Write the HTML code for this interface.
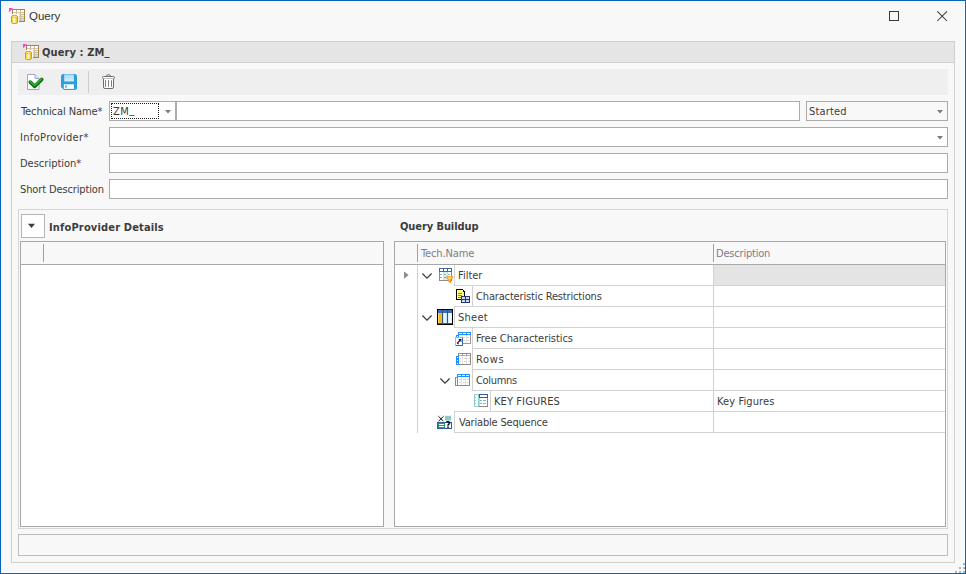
<!DOCTYPE html>
<html>
<head>
<meta charset="utf-8">
<title>Query</title>
<style>
html,body{margin:0;padding:0;}
body{width:966px;height:574px;overflow:hidden;background:#f8f8f8;position:relative;
  font-family:"DejaVu Sans Condensed","Liberation Sans",sans-serif;font-size:11px;color:#3c3c3c;}
*{box-sizing:border-box;}
.abs{position:absolute;}
#win{position:absolute;left:0;top:0;width:966px;height:574px;border:1px solid #0566b8;background:#f8f8f8;box-shadow:inset 0 0 0 1px #ffffff;}
.t{position:absolute;white-space:nowrap;line-height:14px;height:14px;}
.b{font-weight:bold;}
.inp{position:absolute;height:20px;border:1px solid #ababab;background:#fff;}
.hl{position:absolute;height:1px;background:#d4d4d4;}
.vl{position:absolute;width:1px;background:#d4d4d4;}
svg{position:absolute;overflow:visible;}
</style>
</head>
<body>
<div id="win"></div>

<!-- title bar -->
<svg style="left:9px;top:8px" width="16" height="16" viewBox="0 0 16 16" shape-rendering="crispEdges"><rect x="3" y="1" width="13" height="13" fill="#a98450" /><rect x="4" y="2" width="11" height="11" fill="#ffffff" /><rect x="4" y="2" width="11" height="1" fill="#ffffff" /><rect x="4" y="3" width="11" height="1" fill="#fbfdff" /><rect x="4" y="5" width="11" height="1" fill="#ecf5ff" /><rect x="4" y="7" width="11" height="1" fill="#dcedff" /><rect x="4" y="9" width="11" height="1" fill="#cce4ff" /><rect x="4" y="11" width="11" height="1" fill="#c0deff" /><rect x="4" y="12" width="11" height="1" fill="#b8daff" /><rect x="7" y="2" width="1" height="11" fill="#c9b48c" /><rect x="11" y="2" width="1" height="11" fill="#c9b48c" /><rect x="4" y="4" width="11" height="1" fill="#d6c6a4" /><rect x="4" y="6" width="11" height="1" fill="#d6c6a4" /><rect x="4" y="8" width="11" height="1" fill="#d6c6a4" /><rect x="4" y="10" width="11" height="1" fill="#d6c6a4" /><rect x="3" y="6" width="7" height="8" fill="#ffffff" opacity="0.9"/><polygon points="0,0 4.2,0 0,4.2" fill="#ff3fd0" shape-rendering="geometricPrecision"/><g shape-rendering="geometricPrecision"><defs><linearGradient id="cy" x1="0" x2="1" y1="0" y2="0"><stop offset="0" stop-color="#efbc1c"/><stop offset="0.2" stop-color="#fbe050"/><stop offset="0.45" stop-color="#fffcd4"/><stop offset="0.75" stop-color="#fbdc44"/><stop offset="1" stop-color="#e2a814"/></linearGradient></defs><path d="M2.5 8.4 Q2.5 7.4 5.5 7.4 Q8.5 7.4 8.5 8.4 V14.6 Q8.5 15.6 5.5 15.6 Q2.5 15.6 2.5 14.6 Z" fill="url(#cy)" stroke="#cc9a24" stroke-width="1"/><ellipse cx="5.5" cy="8.7" rx="2.6" ry="0.9" fill="#fdeea0" stroke="#d8a420" stroke-width="0.5"/></g></svg>
<div class="t" style="left:29px;top:9px;letter-spacing:0.0px;font-size:11.5px;font-family:'Liberation Sans',sans-serif;color:#333;">Query</div>
<svg style="left:889px;top:11px" width="12" height="12" viewBox="0 0 12 12" shape-rendering="crispEdges"><rect x="0.5" y="0.5" width="9" height="9" fill="none" stroke="#3a3a3a" stroke-width="1"/></svg>
<svg style="left:937px;top:11px" width="12" height="12" viewBox="0 0 12 12"><path d="M0.3 0.3 L10 10 M10 0.3 L0.3 10" fill="none" stroke="#3a3a3a" stroke-width="1.05"/></svg>

<!-- group panel -->
<div class="abs" style="left:11px;top:41px;width:944px;height:522px;border:1px solid #cfcfcf;background:#f8f8f8;"></div>
<div class="abs" style="left:12px;top:42px;width:942px;height:20px;background:#e5e5e5;"></div>
<div class="hl" style="left:12px;top:62px;width:942px;background:#d0d0d0;"></div>
<svg style="left:23px;top:44px" width="16" height="16" viewBox="0 0 16 16" shape-rendering="crispEdges"><rect x="3" y="1" width="13" height="13" fill="#a98450" /><rect x="4" y="2" width="11" height="11" fill="#ffffff" /><rect x="4" y="2" width="11" height="1" fill="#ffffff" /><rect x="4" y="3" width="11" height="1" fill="#fbfdff" /><rect x="4" y="5" width="11" height="1" fill="#ecf5ff" /><rect x="4" y="7" width="11" height="1" fill="#dcedff" /><rect x="4" y="9" width="11" height="1" fill="#cce4ff" /><rect x="4" y="11" width="11" height="1" fill="#c0deff" /><rect x="4" y="12" width="11" height="1" fill="#b8daff" /><rect x="7" y="2" width="1" height="11" fill="#c9b48c" /><rect x="11" y="2" width="1" height="11" fill="#c9b48c" /><rect x="4" y="4" width="11" height="1" fill="#d6c6a4" /><rect x="4" y="6" width="11" height="1" fill="#d6c6a4" /><rect x="4" y="8" width="11" height="1" fill="#d6c6a4" /><rect x="4" y="10" width="11" height="1" fill="#d6c6a4" /><rect x="3" y="6" width="7" height="8" fill="#ffffff" opacity="0.9"/><polygon points="0,0 4.2,0 0,4.2" fill="#ff3fd0" shape-rendering="geometricPrecision"/><g shape-rendering="geometricPrecision"><defs><linearGradient id="cy" x1="0" x2="1" y1="0" y2="0"><stop offset="0" stop-color="#efbc1c"/><stop offset="0.2" stop-color="#fbe050"/><stop offset="0.45" stop-color="#fffcd4"/><stop offset="0.75" stop-color="#fbdc44"/><stop offset="1" stop-color="#e2a814"/></linearGradient></defs><path d="M2.5 8.4 Q2.5 7.4 5.5 7.4 Q8.5 7.4 8.5 8.4 V14.6 Q8.5 15.6 5.5 15.6 Q2.5 15.6 2.5 14.6 Z" fill="url(#cy)" stroke="#cc9a24" stroke-width="1"/><ellipse cx="5.5" cy="8.7" rx="2.6" ry="0.9" fill="#fdeea0" stroke="#d8a420" stroke-width="0.5"/></g></svg>
<div class="t b" style="left:42px;top:46px;letter-spacing:0.1px;">Query : ZM<span style="position:relative;top:-1px">_</span></div>

<!-- toolbar -->
<div class="abs" style="left:18px;top:69px;width:930px;height:26px;background:#efefef;"></div>
<div class="vl" style="left:88px;top:71px;height:22px;background:#cdcdcd;"></div>
<svg style="left:27px;top:74px" width="16" height="16" viewBox="0 0 16 16"><g shape-rendering="geometricPrecision"><path d="M0.5 0.5 H8 L12 4.5 V15.5 H0.5 Z" fill="#ffffff" stroke="#a2a2ca" stroke-width="1"/><path d="M8 0.5 V4.5 H12" fill="#e8e8f4" stroke="#a2a2ca" stroke-width="1"/><path d="M3.3 8.1 L7.7 12.3 L14.7 5.5" fill="none" stroke="#107410" stroke-width="3.7" stroke-linecap="round" stroke-linejoin="round"/><path d="M3.5 7.7 L7.7 11.5 L14.5 5.1" fill="none" stroke="#3cb43c" stroke-width="1.3" stroke-linecap="round" stroke-linejoin="round"/></g></svg>
<svg style="left:61px;top:74px" width="16" height="16" viewBox="0 0 16 16"><g shape-rendering="geometricPrecision"><defs><linearGradient id="sv" x1="0" x2="0" y1="0" y2="1"><stop offset="0" stop-color="#a8d8f0"/><stop offset="1" stop-color="#d6eefa"/></linearGradient></defs><path d="M2.5 0 H13.5 Q16 0 16 2.5 V13.5 Q16 16 13.5 16 H3 L0 13 V2.5 Q0 0 2.5 0 Z" fill="#2a9fd8"/><rect x="3.2" y="0.4" width="9.8" height="7" fill="url(#sv)"/><rect x="2.8" y="10.3" width="10.2" height="4.6" fill="#ffffff"/><rect x="4.2" y="11.5" width="1.5" height="2.2" fill="#2a9fd8"/></g></svg>
<svg style="left:102px;top:74px" width="14" height="16" viewBox="0 0 14 16"><g shape-rendering="geometricPrecision" fill="none" stroke="#6e6e6e" stroke-width="1"><path d="M4.5 2.5 Q4.5 0.6 6.5 0.6 Q8.5 0.6 8.5 2.5" /><rect x="0.5" y="2.5" width="12" height="2.1" rx="1" fill="#ffffff"/><path d="M1.5 4.6 V13 Q1.5 14.5 3 14.5 H10 Q11.5 14.5 11.5 13 V4.6" fill="#ffffff"/><path d="M3.5 6.2 V12.8 M6.5 6.2 V12.8 M9.5 6.2 V12.8" stroke-width="0.9"/></g></svg>

<!-- form -->
<div class="t" style="left:21px;top:105px;letter-spacing:-0.071px;">Technical Name*</div>
<div class="t" style="left:20px;top:131px;letter-spacing:0.333px;">InfoProvider*</div>
<div class="t" style="left:20px;top:157px;letter-spacing:0.0px;">Description*</div>
<div class="t" style="left:20px;top:183px;letter-spacing:-0.125px;">Short Description</div>

<div class="inp" style="left:109px;top:101px;width:67px;"></div>
<div class="abs" style="left:111px;top:103px;width:48px;height:16px;border:1px dotted #222;"></div>
<div class="t" style="left:113px;top:105px;letter-spacing:0.5px;">ZM<span style="position:relative;top:-2px">_</span></div>
<svg style="left:165px;top:110px" width="7" height="4" viewBox="0 0 7 4"><polygon points="0,0 6,0 3,3.4" fill="#7c7c7c" shape-rendering="geometricPrecision"/></svg>
<div class="inp" style="left:176px;top:101px;width:624px;"></div>
<div class="inp" style="left:806px;top:101px;width:142px;background:#f8f8f8;"></div>
<div class="t" style="left:809px;top:105px;letter-spacing:0.167px;">Started</div>
<svg style="left:937px;top:110px" width="7" height="4" viewBox="0 0 7 4"><polygon points="0,0 6,0 3,3.4" fill="#7c7c7c" shape-rendering="geometricPrecision"/></svg>
<div class="inp" style="left:109px;top:127px;width:839px;"></div>
<svg style="left:937px;top:136px" width="7" height="4" viewBox="0 0 7 4"><polygon points="0,0 6,0 3,3.4" fill="#7c7c7c" shape-rendering="geometricPrecision"/></svg>
<div class="inp" style="left:109px;top:153px;width:839px;"></div>
<div class="inp" style="left:109px;top:179px;width:839px;"></div>

<!-- inner panel -->
<div class="abs" style="left:18px;top:209px;width:930px;height:320px;border:1px solid #d6d6d6;"></div>
<div class="abs" style="left:21px;top:214px;width:24px;height:24px;border:1px solid #b4b4b4;background:#fff;"></div>
<svg style="left:28px;top:223px" width="8" height="6" viewBox="0 0 8 6"><polygon points="0,0.7 7,0.7 3.5,4.9" fill="#3c3c3c"/></svg>
<div class="t b" style="left:49px;top:221px;letter-spacing:0.158px;">InfoProvider Details</div>
<div class="t b" style="left:400px;top:220px;letter-spacing:-0.083px;">Query Buildup</div>

<!-- left grid -->
<div class="abs" style="left:20px;top:241px;width:364px;height:286px;border:1px solid #a8a8a8;background:#fff;"></div>
<div class="abs" style="left:21px;top:242px;width:362px;height:22px;background:#f8f8f8;"></div>
<div class="hl" style="left:21px;top:264px;width:362px;background:#a8a8a8;"></div>
<div class="vl" style="left:43px;top:244px;height:18px;background:#a0a0a0;"></div>

<!-- right grid -->
<div class="abs" style="left:394px;top:241px;width:552px;height:286px;border:1px solid #a8a8a8;background:#fff;"></div>
<div class="abs" style="left:395px;top:242px;width:550px;height:22px;background:#f8f8f8;"></div>
<div class="hl" style="left:395px;top:264px;width:550px;background:#a8a8a8;"></div>
<div class="vl" style="left:417px;top:244px;height:18px;background:#a0a0a0;"></div>
<div class="vl" style="left:713px;top:244px;height:18px;background:#a0a0a0;"></div>
<div class="t" style="left:421px;top:247px;letter-spacing:-0.125px;color:#7d7d84;">Tech.Name</div>
<div class="t" style="left:716px;top:247px;letter-spacing:-0.2px;color:#7d7d84;">Description</div>
<div class="vl" style="left:417px;top:265px;height:168px;background:#d2d2d2;"></div><div class="abs" style="left:714px;top:265px;width:231px;height:20px;background:#e4e4e4;"></div><div class="vl" style="left:713px;top:265px;height:168px;background:#d2d2d2;"></div><div class="vl" style="left:454px;top:265px;height:21px;background:#d2d2d2;"></div><div class="hl" style="left:454px;top:285px;width:491px;background:#d2d2d2;"></div><div class="t" style="left:458px;top:269px;letter-spacing:0.0px;">Filter</div><svg style="left:422px;top:273px" width="10" height="6" viewBox="0 0 10 6"><path d="M0.4 0.5 L5 5.1 L9.6 0.5" fill="none" stroke="#3c3c3c" stroke-width="1.25" shape-rendering="geometricPrecision"/></svg><svg style="left:439px;top:268px" width="14" height="15" viewBox="0 0 14 15" shape-rendering="crispEdges"><rect x="0" y="0" width="13" height="4" fill="#3a6aa8" /><rect x="1" y="1" width="3" height="2" fill="#ffffff" /><rect x="5" y="1" width="3" height="2" fill="#ffffff" /><rect x="9" y="1" width="3" height="2" fill="#ffffff" /><rect x="0" y="4" width="13" height="9" fill="#8c8c8c" /><rect x="1" y="4" width="11" height="8" fill="#ffffff" /><rect x="5" y="4" width="3" height="8" fill="#d6f0f6" /><rect x="4" y="4" width="1" height="8" fill="#c8dfe4" /><rect x="8" y="4" width="1" height="8" fill="#c8dfe4" /><rect x="1" y="6" width="2" height="1" fill="#6cbcbc" /><rect x="5" y="6" width="2" height="1" fill="#6cbcbc" /><rect x="9" y="6" width="2" height="1" fill="#6cbcbc" /><rect x="1" y="9" width="2" height="1" fill="#6cbcbc" /><rect x="5" y="9" width="2" height="1" fill="#6cbcbc" /><rect x="9" y="9" width="2" height="1" fill="#6cbcbc" /><g shape-rendering="geometricPrecision"><path d="M7.6 8.8 H13.6 V9.6 L11.5 11.6 V14.3 L9.9 13.5 V11.6 L7.6 9.6 Z" fill="#ffe9a0" stroke="#ff9000" stroke-width="1.1" stroke-linejoin="round"/></g></svg>
<div class="vl" style="left:472px;top:286px;height:21px;background:#d2d2d2;"></div><div class="hl" style="left:454px;top:306px;width:491px;background:#d2d2d2;"></div><div class="t" style="left:476px;top:290px;letter-spacing:-0.154px;">Characteristic Restrictions</div><svg style="left:456px;top:289px" width="14" height="14" viewBox="0 0 14 14" shape-rendering="crispEdges"><rect x="0" y="0" width="7" height="11" fill="#000000" /><rect x="1" y="1" width="5" height="9" fill="#ffff80" /><rect x="7" y="1" width="1" height="1" fill="#000" /><rect x="7" y="2" width="2" height="9" fill="#000" /><rect x="6" y="1" width="1" height="2" fill="#ffff80" /><rect x="6" y="3" width="2" height="7" fill="#ffff80" /><rect x="6" y="0" width="1" height="1" fill="#000" /><rect x="6" y="1" width="1" height="1" fill="#ffffc8" /><rect x="2" y="4" width="4" height="1" fill="#8c8c50" /><rect x="2" y="6" width="4" height="1" fill="#8c8c50" /><rect x="2" y="8" width="4" height="1" fill="#8c8c50" /><rect x="5" y="7" width="9" height="7" fill="#1c3c7c" /><rect x="6" y="8" width="3" height="2" fill="#d8d4f8" /><rect x="10" y="8" width="3" height="2" fill="#d8d4f8" /><rect x="6" y="11" width="3" height="2" fill="#d8d4f8" /><rect x="10" y="11" width="3" height="2" fill="#d8d4f8" /></svg>
<div class="vl" style="left:454px;top:307px;height:21px;background:#d2d2d2;"></div><div class="hl" style="left:454px;top:327px;width:491px;background:#d2d2d2;"></div><div class="t" style="left:458px;top:311px;letter-spacing:0.25px;">Sheet</div><svg style="left:422px;top:315px" width="10" height="6" viewBox="0 0 10 6"><path d="M0.4 0.5 L5 5.1 L9.6 0.5" fill="none" stroke="#3c3c3c" stroke-width="1.25" shape-rendering="geometricPrecision"/></svg><svg style="left:437px;top:309px" width="16" height="16" viewBox="0 0 16 16" shape-rendering="crispEdges"><rect x="0" y="0" width="16" height="16" fill="#000000" /><rect x="1" y="1" width="14" height="14" fill="#e4f4ff" /><rect x="1" y="1" width="14" height="3" fill="#3a6cc0" /><rect x="1" y="4" width="4" height="11" fill="#f8b820" /><rect x="1" y="4" width="1" height="11" fill="#ffd870" /><rect x="5" y="1" width="1" height="14" fill="#2c5a70" /><rect x="10" y="1" width="1" height="14" fill="#2c5a70" /><rect x="6" y="4" width="4" height="11" fill="#c8e8fc" /><rect x="11" y="4" width="4" height="11" fill="#d8f0ff" /><rect x="7" y="4" width="2" height="11" fill="#e8f6ff" /><rect x="12" y="4" width="2" height="11" fill="#f4fbff" /><rect x="1" y="14" width="14" height="1" fill="#585070" /></svg>
<div class="vl" style="left:472px;top:328px;height:21px;background:#d2d2d2;"></div><div class="hl" style="left:472px;top:348px;width:473px;background:#d2d2d2;"></div><div class="t" style="left:476px;top:332px;letter-spacing:-0.053px;">Free Characteristics</div><svg style="left:455px;top:332px" width="16" height="14" viewBox="0 0 16 14" shape-rendering="crispEdges"><rect x="3" y="0" width="13" height="3" fill="#1e90ff" /><rect x="4" y="1" width="3" height="1" fill="#ffffff" /><rect x="8" y="1" width="3" height="1" fill="#ffffff" /><rect x="12" y="1" width="3" height="1" fill="#ffffff" /><rect x="3" y="3" width="13" height="9" fill="#9a9a9a" /><rect x="3" y="3" width="12" height="8" fill="#ffffff" /><rect x="7" y="3" width="1" height="8" fill="#e2e2e2" /><rect x="11" y="3" width="1" height="8" fill="#e2e2e2" /><rect x="8" y="5" width="2" height="1" fill="#d4d4d4" /><rect x="12" y="5" width="2" height="1" fill="#d4d4d4" /><rect x="8" y="8" width="2" height="1" fill="#d4d4d4" /><rect x="12" y="8" width="2" height="1" fill="#d4d4d4" /><rect x="1" y="3" width="3" height="2" fill="#1e90ff" /><rect x="2" y="4" width="1" height="1" fill="#d8ecff" /><rect x="0" y="5" width="8" height="9" fill="#8cc6ca" /><rect x="7" y="6" width="1" height="8" fill="#3c6c9c" /><rect x="1" y="13" width="7" height="1" fill="#3c6c9c" /><rect x="1" y="6" width="6" height="7" fill="#ffffff" /><g shape-rendering="geometricPrecision"><polygon points="3.2,7 6.4,7 6.4,10.2" fill="#1a1a5c"/><path d="M5.4 8 L2.4 11 L3.6 12.2" fill="none" stroke="#1a1a5c" stroke-width="1.2"/></g></svg>
<div class="vl" style="left:472px;top:349px;height:21px;background:#d2d2d2;"></div><div class="hl" style="left:472px;top:369px;width:473px;background:#d2d2d2;"></div><div class="t" style="left:476px;top:353px;letter-spacing:0.667px;">Rows</div><svg style="left:456px;top:353px" width="15" height="12" viewBox="0 0 15 12" shape-rendering="crispEdges"><rect x="2" y="0" width="13" height="12" fill="#8c8c8c" /><rect x="3" y="1" width="11" height="10" fill="#ffffff" /><rect x="3" y="2" width="11" height="1" fill="#b4b4b4" /><rect x="6" y="1" width="1" height="2" fill="#a0a0a0" /><rect x="10" y="1" width="1" height="2" fill="#a0a0a0" /><rect x="6" y="3" width="1" height="8" fill="#e2e2e2" /><rect x="10" y="3" width="1" height="8" fill="#e2e2e2" /><rect x="4" y="5" width="1" height="1" fill="#d6c8c0" /><rect x="8" y="5" width="2" height="1" fill="#d2d2d2" /><rect x="12" y="5" width="2" height="1" fill="#d2d2d2" /><rect x="4" y="8" width="1" height="1" fill="#d6c8c0" /><rect x="8" y="8" width="2" height="1" fill="#d2d2d2" /><rect x="12" y="8" width="2" height="1" fill="#d2d2d2" /><rect x="0" y="3" width="3" height="9" fill="#1e90ff" /><rect x="1" y="4" width="1" height="1" fill="#ffffff" /><rect x="1" y="7" width="1" height="1" fill="#ffffff" /><rect x="1" y="10" width="1" height="1" fill="#ffffff" /></svg>
<div class="vl" style="left:472px;top:370px;height:21px;background:#d2d2d2;"></div><div class="hl" style="left:472px;top:390px;width:473px;background:#d2d2d2;"></div><div class="t" style="left:476px;top:374px;letter-spacing:-0.333px;">Columns</div><svg style="left:440px;top:378px" width="10" height="6" viewBox="0 0 10 6"><path d="M0.4 0.5 L5 5.1 L9.6 0.5" fill="none" stroke="#3c3c3c" stroke-width="1.25" shape-rendering="geometricPrecision"/></svg><svg style="left:455px;top:374px" width="15" height="12" viewBox="0 0 15 12" shape-rendering="crispEdges"><rect x="0" y="3" width="15" height="9" fill="#8c8c8c" /><rect x="1" y="3" width="13" height="8" fill="#ffffff" /><rect x="2" y="3" width="1" height="8" fill="#909090" /><rect x="0" y="3" width="3" height="1" fill="#8c8c8c" /><rect x="6" y="3" width="1" height="8" fill="#e2e2e2" /><rect x="10" y="3" width="1" height="8" fill="#e2e2e2" /><rect x="4" y="5" width="2" height="1" fill="#d2d2d2" /><rect x="8" y="5" width="2" height="1" fill="#d2d2d2" /><rect x="12" y="5" width="2" height="1" fill="#d2d2d2" /><rect x="4" y="8" width="2" height="1" fill="#d2d2d2" /><rect x="8" y="8" width="2" height="1" fill="#d2d2d2" /><rect x="12" y="8" width="2" height="1" fill="#d2d2d2" /><rect x="2" y="0" width="13" height="3" fill="#1e90ff" /><rect x="3" y="1" width="3" height="1" fill="#ffffff" /><rect x="7" y="1" width="3" height="1" fill="#ffffff" /><rect x="11" y="1" width="3" height="1" fill="#ffffff" /></svg>
<div class="vl" style="left:490px;top:391px;height:21px;background:#d2d2d2;"></div><div class="hl" style="left:454px;top:411px;width:491px;background:#d2d2d2;"></div><div class="t" style="left:494px;top:395px;letter-spacing:0.1px;">KEY FIGURES</div><div class="t" style="left:717px;top:395px;letter-spacing:0.1px;">Key Figures</div><svg style="left:474px;top:394px" width="14" height="13" viewBox="0 0 14 13" shape-rendering="crispEdges"><rect x="0" y="0" width="5" height="13" fill="#90cccc" /><rect x="1" y="1" width="3" height="11" fill="#ffffff" /><rect x="0" y="3" width="2" height="1" fill="#90cccc" /><rect x="0" y="6" width="2" height="1" fill="#90cccc" /><rect x="0" y="9" width="2" height="1" fill="#90cccc" /><rect x="4" y="0" width="1" height="13" fill="#90cccc" /><rect x="5" y="3" width="9" height="10" fill="#8c8c8c" /><rect x="5" y="3" width="8" height="9" fill="#ffffff" /><rect x="5" y="0" width="9" height="4" fill="#2c5c9c" /><rect x="6" y="1" width="7" height="2" fill="#ffffff" /><rect x="5" y="4" width="1" height="8" fill="#b8dcdc" /><rect x="6" y="6" width="2" height="1" fill="#70c0c0" /><rect x="9" y="6" width="3" height="1" fill="#70c0c0" /><rect x="6" y="9" width="2" height="1" fill="#70c0c0" /><rect x="9" y="9" width="3" height="1" fill="#70c0c0" /></svg>
<div class="vl" style="left:454px;top:412px;height:21px;background:#d2d2d2;"></div><div class="hl" style="left:454px;top:432px;width:491px;background:#d2d2d2;"></div><div class="t" style="left:459px;top:416px;letter-spacing:-0.188px;">Variable Sequence</div><svg style="left:437px;top:415px" width="15" height="14" viewBox="0 0 15 14" shape-rendering="crispEdges"><rect x="0" y="0" width="15" height="7" fill="#e8f6f8" /><rect x="1" y="1" width="7" height="6" fill="#ffffff" /><rect x="8" y="1" width="6" height="4" fill="#90c8c8" /><rect x="8" y="5" width="6" height="1" fill="#c4e2e4" /><rect x="0" y="7" width="15" height="7" fill="#2c5c9c" /><rect x="1" y="8" width="7" height="5" fill="#2c9c5c" /><rect x="2" y="9" width="5" height="1" fill="#ffffff" /><rect x="2" y="11" width="5" height="1" fill="#ffffff" /><rect x="8" y="8" width="6" height="5" fill="#ffffff" /><g shape-rendering="geometricPrecision"><path d="M1.6 1.4 L6.4 6.2 M6.4 1.4 L1.6 6.2" stroke="#111" stroke-width="1" fill="none"/></g><text x="8.8" y="13" font-family="DejaVu Sans,Liberation Sans,sans-serif" font-weight="bold" font-size="8.5px" fill="#000">?</text></svg>
<svg style="left:404px;top:271px" width="5" height="9" viewBox="0 0 5 9"><polygon points="0,0.4 4.6,4.1 0,7.8" fill="#8a8a8a" shape-rendering="geometricPrecision"/></svg>

<!-- status box -->
<div class="abs" style="left:18px;top:534px;width:930px;height:22px;border:1px solid #bdbdbd;"></div>
<!-- size grip -->
<svg style="left:954px;top:562px" width="11" height="11" viewBox="0 0 11 11" shape-rendering="crispEdges">
<rect x="9" y="1" width="2" height="2" fill="#b4b4b4"/><rect x="5" y="5" width="2" height="2" fill="#b4b4b4"/><rect x="9" y="5" width="2" height="2" fill="#b4b4b4"/>
<rect x="1" y="9" width="2" height="2" fill="#b4b4b4"/><rect x="5" y="9" width="2" height="2" fill="#b4b4b4"/><rect x="9" y="9" width="2" height="2" fill="#b4b4b4"/>
</svg>
</body>
</html>
